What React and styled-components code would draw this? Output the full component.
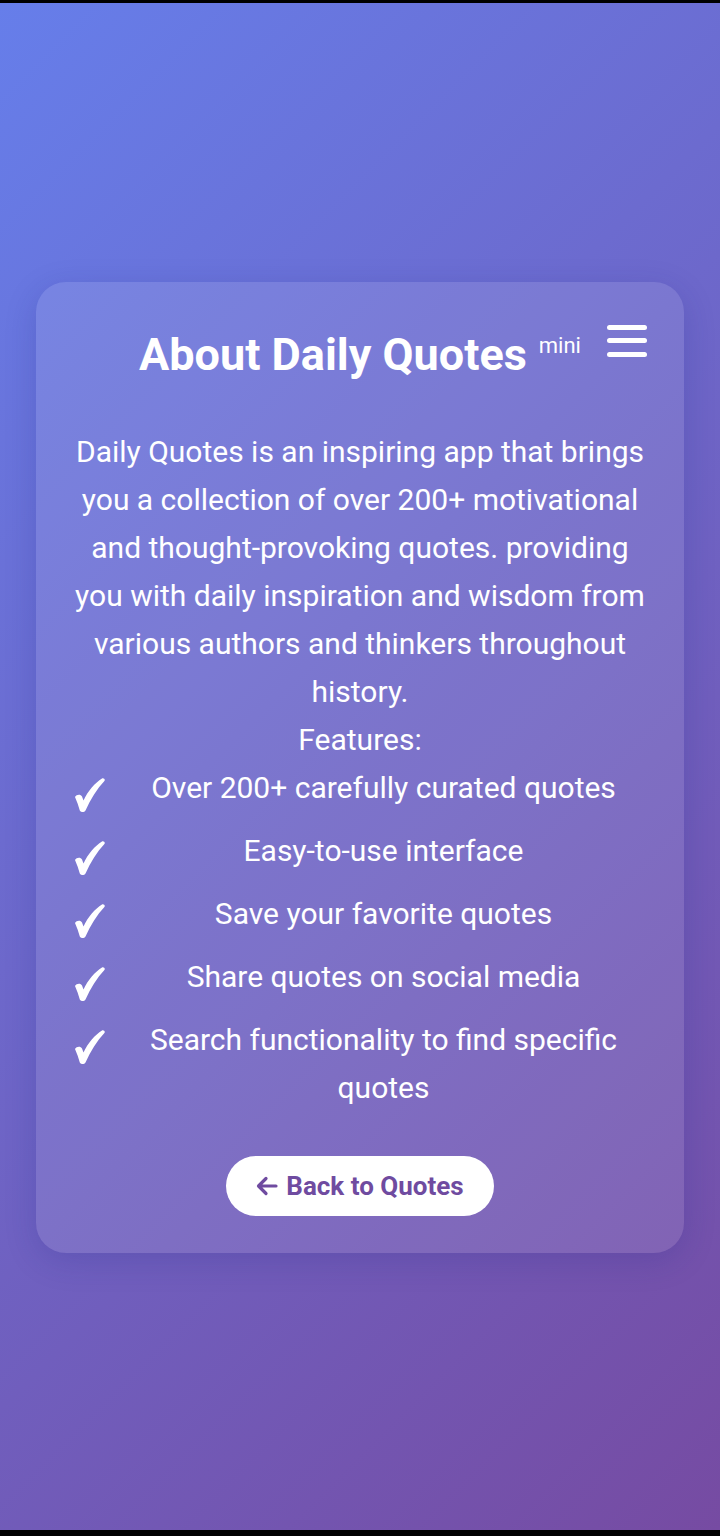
import styled, { createGlobalStyle } from "styled-components";

const GlobalStyle = createGlobalStyle`
  html, body {
    margin: 0;
    padding: 0;
    background: #000000;
  }
  body {
    font-family: Roboto, "Noto Sans", "Liberation Sans", sans-serif;
    padding: 3px 0 6px;
  }
`;

const Page = styled.div`
  height: 1527px;
  padding-top: 2px;
  box-sizing: border-box;
  background: linear-gradient(135deg, #667eea 0%, #764ba2 100%);
  display: flex;
  align-items: center;
  justify-content: center;
`;

const Card = styled.div`
  position: relative;
  width: 90%;
  box-sizing: border-box;
  padding: 37px 36px 37px;
  border-radius: 30px;
  background: rgba(255, 255, 255, 0.1);
  box-shadow: 0 8px 32px rgba(31, 38, 135, 0.2);
  color: #ffffff;
  display: flex;
  flex-direction: column;
  align-items: center;
`;

const Title = styled.h1`
  margin: 0 0 46px;
  font-size: 45px;
  line-height: 54px;
  font-weight: 700;
  text-align: center;
`;

const Mini = styled.sup`
  font-size: 22px;
  font-weight: 400;
  margin-left: 12px;
  vertical-align: 17px;
`;

const MenuButton = styled.button`
  position: absolute;
  top: 41px;
  right: 37px;
  width: 40px;
  height: 34px;
  padding: 0;
  border: none;
  background: none;
  cursor: pointer;
  display: flex;
`;

const Paragraph = styled.p`
  margin: 0;
  font-size: 30px;
  line-height: 48px;
  text-align: center;
`;

const FeatureList = styled.ul`
  list-style: none;
  margin: 0;
  padding: 0;
  width: 100%;
  display: flex;
  flex-direction: column;
  gap: 15px;
`;

const FeatureItem = styled.li`
  display: flex;
  align-items: flex-start;
  font-size: 30px;
  line-height: 48px;
`;

const Check = styled.svg`
  flex: 0 0 30px;
  width: 30px;
  height: 34px;
  margin: 14px 14px 0 3px;
`;

const FeatureText = styled.span`
  flex: 1;
  text-align: center;
`;

const BackButton = styled.button`
  margin-top: 44px;
  width: 268px;
  height: 60px;
  border: none;
  border-radius: 30px;
  background: #ffffff;
  color: #6f4ba0;
  font-family: inherit;
  font-size: 26px;
  font-weight: 700;
  display: flex;
  align-items: center;
  justify-content: center;
  gap: 8px;
  cursor: pointer;
`;

const features = [
  "Over 200+ carefully curated quotes",
  "Easy-to-use interface",
  "Save your favorite quotes",
  "Share quotes on social media",
  "Search functionality to find specific quotes",
];

function CheckMark() {
  return (
    <Check viewBox="0 0 30 34">
      <path
        d="M0 19 C1.5 16.5 5.5 16 7 18.5 L8.5 22.5 C13 13 20 5 27 0.6 C28.6 -0.3 30.6 1.6 29.4 3 C22 11 15.5 21 10.5 32.5 C9.5 34.6 5.8 34.6 4.8 32.5 C3.6 28 2 23.5 0 19 Z"
        fill="#ffffff"
      />
    </Check>
  );
}

export default function App() {
  return (
    <>
      <GlobalStyle />
      <Page>
        <Card>
          <MenuButton aria-label="Menu">
            <svg width="40" height="34" viewBox="0 0 40 34">
              <rect x="0" y="2" width="40" height="5" rx="2.5" fill="#fff" />
              <rect x="0" y="15" width="40" height="5" rx="2.5" fill="#fff" />
              <rect x="0" y="29" width="40" height="5" rx="2.5" fill="#fff" />
            </svg>
          </MenuButton>
          <Title>
            About Daily Quotes<Mini>mini</Mini>
          </Title>
          <Paragraph>
            Daily Quotes is an inspiring app that brings you a collection of
            over 200+ motivational and thought-provoking quotes. providing you
            with daily inspiration and wisdom from various authors and thinkers
            throughout history.
          </Paragraph>
          <Paragraph>Features:</Paragraph>
          <FeatureList>
            {features.map((f) => (
              <FeatureItem key={f}>
                <CheckMark />
                <FeatureText>{f}</FeatureText>
              </FeatureItem>
            ))}
          </FeatureList>
          <BackButton>
            <svg width="22" height="20" viewBox="0 0 22 20">
              <path
                d="M20 10 H3 M10 2.5 L2.5 10 L10 17.5"
                fill="none"
                stroke="#6f4ba0"
                strokeWidth="3.2"
                strokeLinecap="round"
                strokeLinejoin="round"
              />
            </svg>
            Back to Quotes
          </BackButton>
        </Card>
      </Page>
    </>
  );
}
